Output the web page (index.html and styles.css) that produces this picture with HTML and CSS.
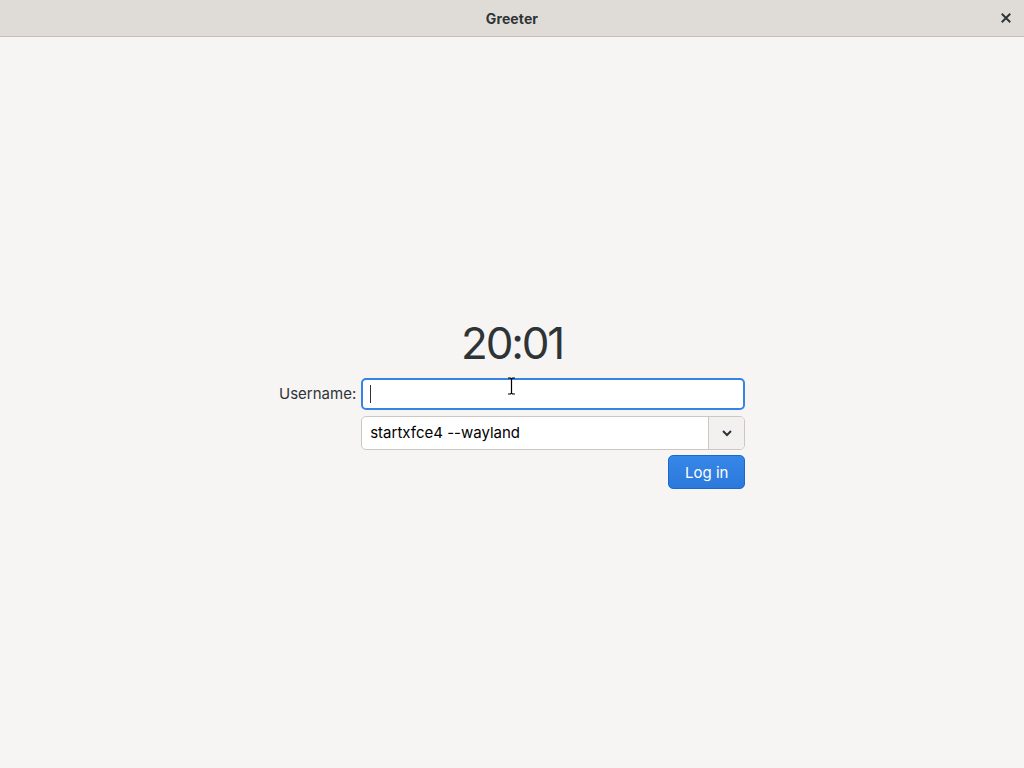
FILE: index.html
```html
<!DOCTYPE html>
<html>
<head>
<meta charset="utf-8">
<link rel="stylesheet" href="styles.css">
</head>
<body>
<div class="window">
  <header class="titlebar">
    <span class="title">Greeter</span>
    <button class="close" aria-label="Close">
      <svg width="10" height="10" viewBox="0 0 10 10"><path d="M1.5 1.5 L8.5 8.5 M8.5 1.5 L1.5 8.5" stroke="#2e3436" stroke-width="2" stroke-linecap="square"/></svg>
    </button>
  </header>
  <main class="content">
    <div class="login">
      <div class="clock">20:01</div>
      <div class="form">
        <label class="label" for="user">Username:</label>
        <div class="entry focused" id="user"><span class="caret"></span>
          <svg class="ibeam" width="9" height="18" viewBox="0 0 9 18"><path d="M1 1h2.5l1 1 1-1H8M4.5 2v14M1 17h2.5l1-1 1 1H8" fill="none" stroke="#000" stroke-width="1.2"/></svg>
        </div>
        <div class="combo">
          <div class="combo-text">startxfce4 --wayland</div>
          <div class="combo-btn">
            <svg width="12" height="8" viewBox="0 0 12 8"><path d="M2 2 L6 6 L10 2" fill="none" stroke="#2e3436" stroke-width="2"/></svg>
          </div>
        </div>
        <div class="actions"><button class="login-btn">Log in</button></div>
      </div>
    </div>
  </main>
</div>
</body>
</html>
```
FILE: styles.css
```css
html, body {
  margin: 0;
  padding: 0;
  height: 100%;
}
body {
  background: #f6f5f4;
  font-family: Inter, "Noto Sans", sans-serif;
  color: #2e3436;
}
.window {
  display: flex;
  flex-direction: column;
  height: 100%;
}
.titlebar {
  height: 36px;
  flex: none;
  background: #dfdcd8;
  border-bottom: 1px solid #c6bfb7;
  display: flex;
  align-items: center;
  justify-content: center;
  position: relative;
}
.title {
  font-size: 14px;
  font-weight: 700;
  color: #2e3436;
  letter-spacing: 0.1px;
}
.close {
  position: absolute;
  right: 12px;
  top: 12px;
  width: 12px;
  height: 12px;
  padding: 0;
  border: 0;
  background: none;
  display: flex;
  align-items: center;
  justify-content: center;
}
.content {
  flex: 1;
  display: flex;
  align-items: center;
  justify-content: center;
}
.login {
  display: flex;
  flex-direction: column;
  align-items: center;
  width: 466px;
}
.clock {
  font-size: 44px;
  line-height: 54px;
  font-weight: 400;
  color: #2e3436;
  margin-bottom: 8px;
  letter-spacing: -2.2px;
}
.form {
  display: grid;
  grid-template-columns: auto 384px;
  column-gap: 5px;
  width: 100%;
}
.label {
  font-size: 15px;
  color: #2e3436;
  align-self: center;
  justify-self: end;
  margin-top: -1px;
}
.entry {
  grid-column: 2;
  height: 32px;
  box-sizing: border-box;
  background: #ffffff;
  border: 2px solid #3584e4;
  border-radius: 5px;
  position: relative;
}
.caret {
  position: absolute;
  left: 7px;
  top: 5px;
  width: 1px;
  height: 18px;
  background: #2e3436;
}
.ibeam {
  position: absolute;
  left: 144px;
  top: -3px;
}
.combo {
  grid-column: 2;
  margin-top: 6px;
  height: 34px;
  box-sizing: border-box;
  border: 1px solid #cdc7c2;
  border-radius: 5px;
  background: #ffffff;
  display: flex;
  overflow: hidden;
}
.combo-text {
  flex: 1;
  padding-left: 8px;
  font-size: 15px;
  line-height: 32px;
  color: #000;
}
.combo-btn {
  width: 35px;
  border-left: 1px solid #cdc7c2;
  background: #f2f1f0;
  display: flex;
  align-items: center;
  justify-content: center;
}
.actions {
  grid-column: 2;
  margin-top: 5px;
  display: flex;
  justify-content: flex-end;
}
.login-btn {
  width: 77px;
  height: 34px;
  border: 1px solid #1b6acb;
  border-radius: 5px;
  background: linear-gradient(#3787e8, #2a79db);
  color: #ffffff;
  font-family: Inter, "Noto Sans", sans-serif;
  font-size: 15px;
  padding: 0;
}
```
